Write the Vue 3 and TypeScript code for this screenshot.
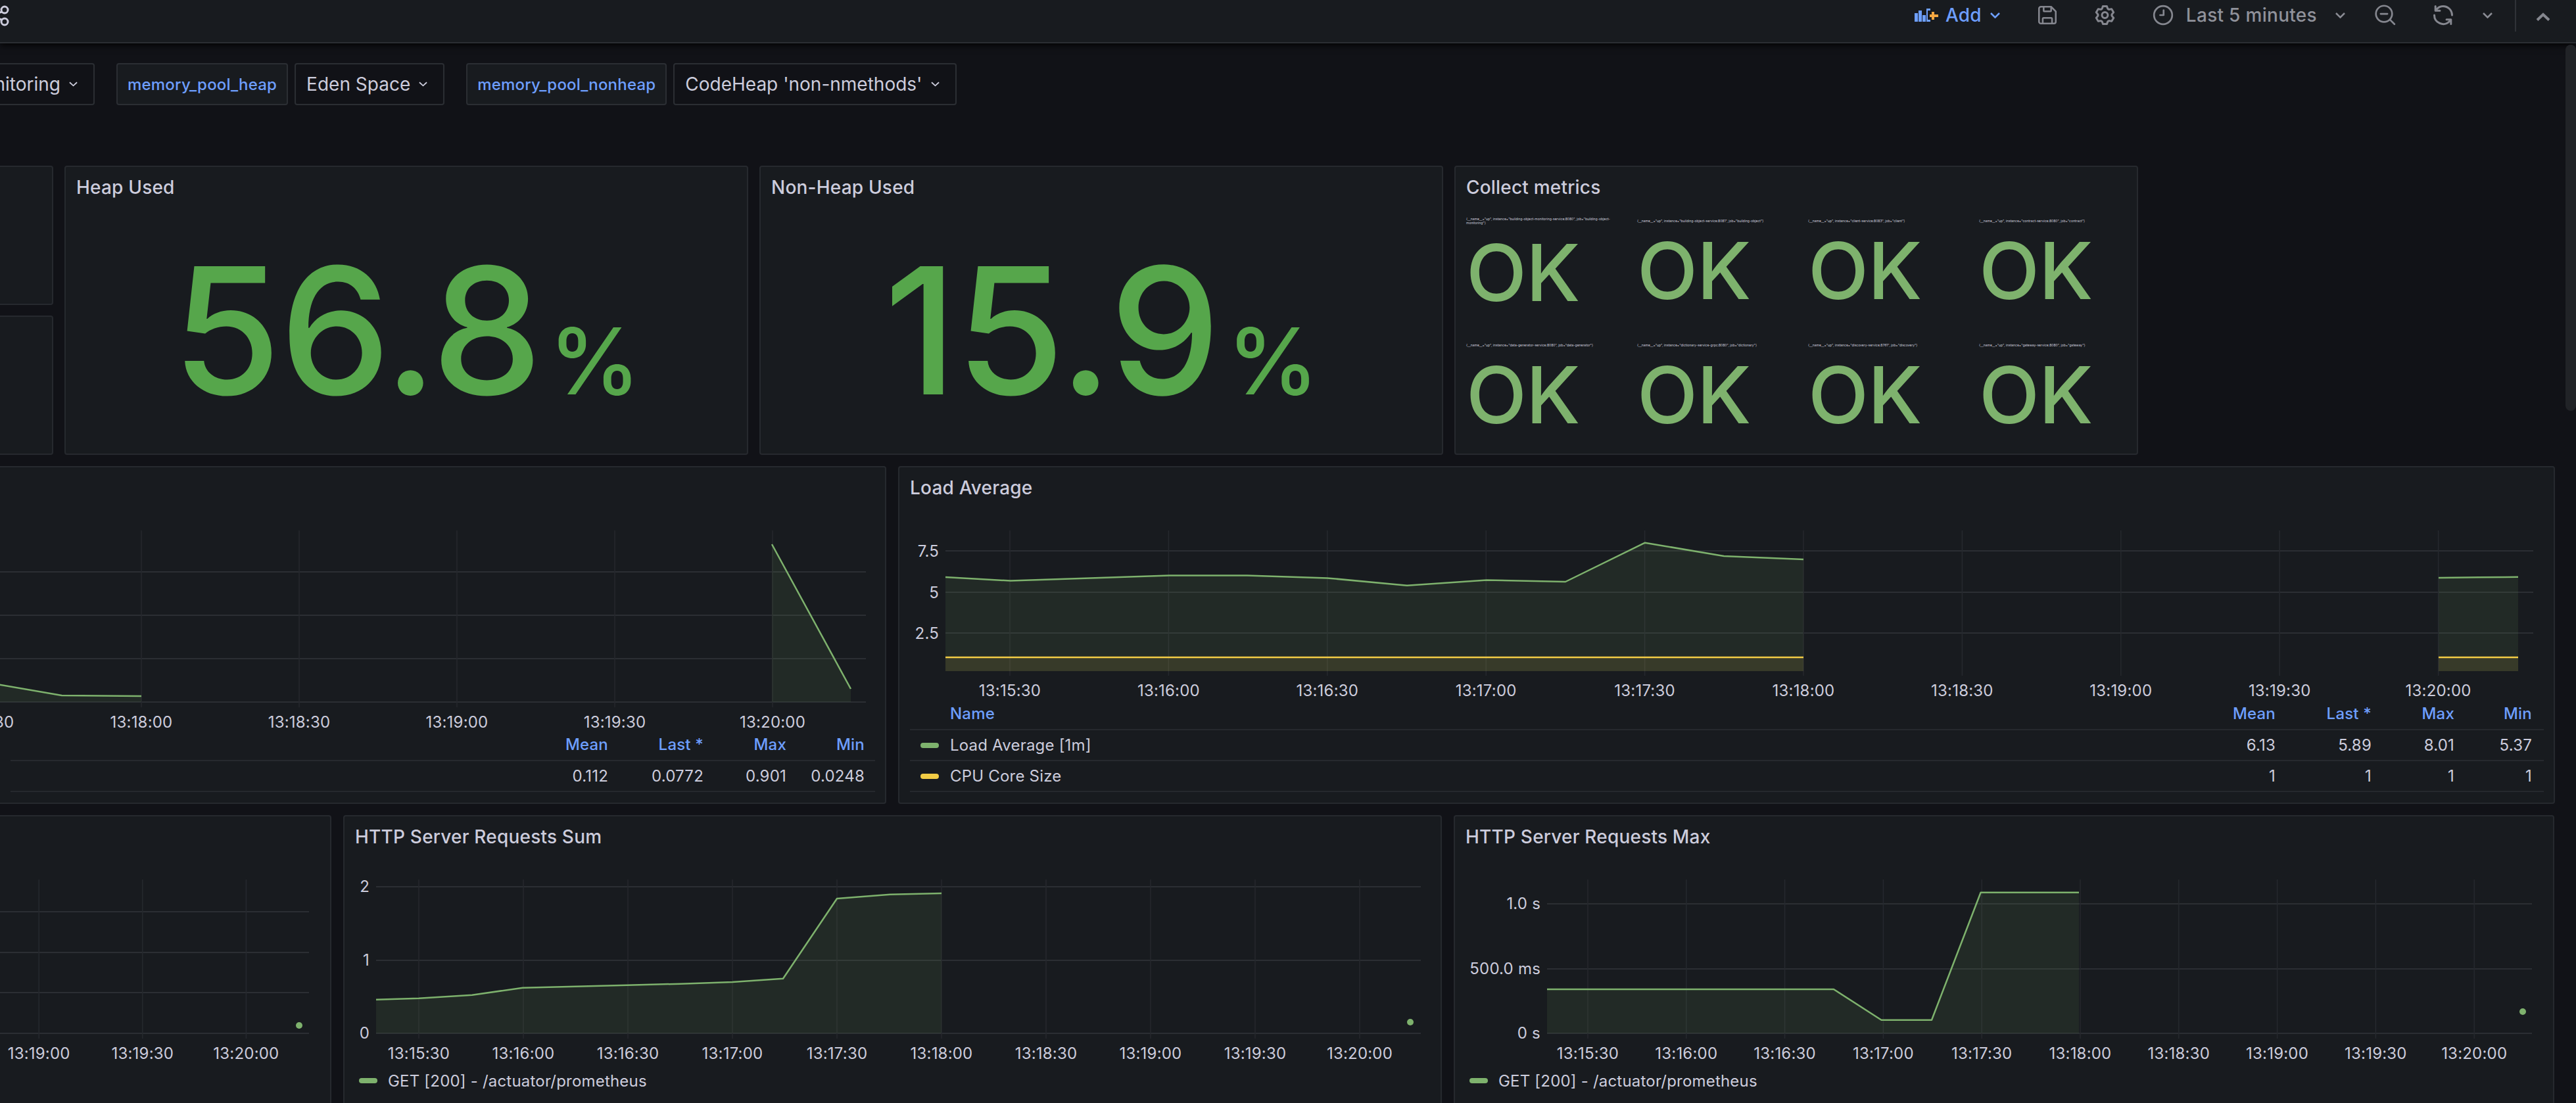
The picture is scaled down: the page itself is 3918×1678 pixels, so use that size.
<script setup lang="ts">
interface Series {
  color: string
  base: number
  segs: number[][][]
}
interface Chart {
  left: number
  top: number
  width: number
  height: number
  plotLeft: number
  plotRight: number
  gridTop: number
  gridBottom: number
  hlines: number[]
  ticks: { x: number; t: string }[]
  tickY: number
  yRight: number
  yLabels: { y: number; t: string }[]
  series: Series[]
  dots: number[][]
}

const GREEN = '#7eb26d'
const YELLOW = '#f2cc45'

// x axis helper: evenly spaced 30s ticks
const allTimes = ['13:15:30', '13:16:00', '13:16:30', '13:17:00', '13:17:30', '13:18:00', '13:18:30', '13:19:00', '13:19:30', '13:20:00']
const mkTicks = (first: number, step: number) => allTimes.map((t, i) => ({ x: first + step * i, t }))

const memChart: Chart = {
  left: 0, top: 773, width: 1346, height: 336,
  plotLeft: 0, plotRight: 1317, gridTop: 807, gridBottom: 1076,
  hlines: [870, 936, 1002, 1068],
  ticks: mkTicks(-985, 240), tickY: 1098,
  yRight: 0, yLabels: [],
  series: [{ color: GREEN, base: 1068, segs: [
    [[-10, 1040], [94, 1058], [215, 1059]],
    [[1174, 828], [1294, 1048]],
  ] }],
  dots: [],
}

const loadChart: Chart = {
  left: 1368, top: 773, width: 2516, height: 289,
  plotLeft: 1438, plotRight: 3853, gridTop: 807, gridBottom: 1028,
  hlines: [838, 901, 963],
  ticks: mkTicks(1536, 241.4), tickY: 1050,
  yRight: 1428,
  yLabels: [{ y: 838, t: '7.5' }, { y: 901, t: '5' }, { y: 963, t: '2.5' }],
  series: [
    { color: GREEN, base: 1021, segs: [
      [[1438, 878], [1537, 883.5], [1658, 879.5], [1778, 875.6], [1897, 875.6], [2019, 879.4], [2140, 890.8], [2261, 882.5], [2381, 885], [2502, 825.7], [2622, 846], [2743, 851]],
      [[3709, 879], [3770, 878.3], [3830, 877.7]],
    ] },
    { color: YELLOW, base: 1021, segs: [
      [[1438, 1000], [2743, 1000]],
      [[3709, 1000], [3830, 1000]],
    ] },
  ],
  dots: [],
}

const countChart: Chart = {
  left: 0, top: 1304, width: 502, height: 318,
  plotLeft: 0, plotRight: 470, gridTop: 1338, gridBottom: 1580,
  hlines: [1387, 1449, 1510, 1572],
  ticks: mkTicks(-1044, 157.6).slice(6), tickY: 1602,
  yRight: 0, yLabels: [],
  series: [],
  dots: [[455, 1560]],
}

const sumChart: Chart = {
  left: 524, top: 1304, width: 1667, height: 318,
  plotLeft: 572, plotRight: 2161, gridTop: 1338, gridBottom: 1580,
  hlines: [1349, 1461, 1572],
  ticks: mkTicks(637, 159), tickY: 1602,
  yRight: 562,
  yLabels: [{ y: 1348, t: '2' }, { y: 1460, t: '1' }, { y: 1571, t: '0' }],
  series: [{ color: GREEN, base: 1572, segs: [
    [[572, 1520.7], [637, 1518.7], [718, 1513.7], [795, 1502.7], [875, 1500.7], [954, 1498.7], [1035, 1496.7], [1114, 1494], [1191, 1488.7], [1273, 1367], [1354, 1360.7], [1432, 1359]],
  ] }],
  dots: [[2145, 1555]],
}

const maxChart: Chart = {
  left: 2214, top: 1304, width: 1670, height: 318,
  plotLeft: 2354, plotRight: 3852, gridTop: 1338, gridBottom: 1580,
  hlines: [1375, 1474, 1572],
  ticks: mkTicks(2416, 149.8), tickY: 1602,
  yRight: 2344,
  yLabels: [{ y: 1374, t: '1.0 s' }, { y: 1473, t: '500.0 ms' }, { y: 1571, t: '0 s' }],
  series: [{ color: GREEN, base: 1572, segs: [
    [[2354, 1505], [2790, 1505], [2862.5, 1551.7], [2939, 1551.7], [3013.6, 1357.7], [3163, 1357.7]],
  ] }],
  dots: [[3838, 1539]],
}

const rowTwo = [
  { title: '', chart: memChart, cls: 'p-mem', rows: [{ name: '', color: '', vals: ['0.112', '0.0772', '0.901', '0.0248'] }] },
  { title: 'Load Average', chart: loadChart, cls: 'p-load', rows: [
    { name: 'Load Average [1m]', color: GREEN, vals: ['6.13', '5.89', '8.01', '5.37'] },
    { name: 'CPU Core Size', color: YELLOW, vals: ['1', '1', '1', '1'] },
  ] },
]

const rowThree = [
  { title: '', chart: countChart, cls: 'p-count', legend: '' },
  { title: 'HTTP Server Requests Sum', chart: sumChart, cls: 'p-sum', legend: 'GET [200] - /actuator/prometheus' },
  { title: 'HTTP Server Requests Max', chart: maxChart, cls: 'p-max', legend: 'GET [200] - /actuator/prometheus' },
]

const targets = [
  '{__name__="up", instance="building-object-monitoring-service:8080", job="building-object-monitoring"}',
  '{__name__="up", instance="building-object-service:8081", job="building-object"}',
  '{__name__="up", instance="client-service:8083", job="client"}',
  '{__name__="up", instance="contract-service:8080", job="contract"}',
  '{__name__="up", instance="data-generator-service:8080", job="data-generator"}',
  '{__name__="up", instance="dictionary-service-grpc:8080", job="dictionary"}',
  '{__name__="up", instance="discovery-service:8761", job="discovery"}',
  '{__name__="up", instance="gateway-service:8080", job="gateway"}',
]

const linePts = (seg: number[][]) => seg.map(p => p.join(',')).join(' ')
const fillPts = (seg: number[][], base: number) =>
  `${seg[0][0]},${base} ${linePts(seg)} ${seg[seg.length - 1][0]},${base}`
</script>

<template>
  <div class="page">
    <!-- top bar -->
    <header class="topbar">
      <svg class="share" width="20" height="48" viewBox="0 0 20 48">
        <circle cx="7" cy="15" r="5" />
        <circle cx="7" cy="33" r="5" />
        <path d="M-4 20L3 18M-4 28L3 30" />
      </svg>
      <svg class="add-ico" width="36" height="20" viewBox="0 0 36 20">
        <rect x="0" y="7" width="5" height="13" fill="#6e9fff" />
        <rect x="6" y="3" width="5" height="17" fill="#6e9fff" />
        <rect x="12" y="10" width="5" height="10" fill="#6e9fff" />
        <rect x="18" y="0" width="6" height="20" fill="#6e9fff" />
        <rect x="20" y="3" width="16" height="14" fill="#181b1f" />
        <path d="M28 5v12M23 11h13" stroke="#f5a742" stroke-width="4" fill="none" />
      </svg>
      <span class="add-txt">Add</span>
      <svg class="chev ml13" width="15" height="9" viewBox="0 0 15 9"><path d="M1 1l6.5 6.5L14 1" stroke="#6e9fff" /></svg>
      <svg class="ico ml55" width="34" height="34" viewBox="0 0 24 24">
        <path d="M5 3h11l5 5v11a2 2 0 0 1-2 2H5a2 2 0 0 1-2-2V5a2 2 0 0 1 2-2z" />
        <path d="M8 3v4a1 1 0 0 0 1 1h6a1 1 0 0 0 1-1V4" />
        <path d="M7 21v-5a1 1 0 0 1 1-1h8a1 1 0 0 1 1 1v5" />
      </svg>
      <svg class="solid ml53" width="36" height="36" viewBox="0 0 24 24">
        <path d="M19.9,12.66a1,1,0,0,1,0-1.32L21.18,9.9a1,1,0,0,0,.12-1.17l-2-3.46a1,1,0,0,0-1.07-.48l-1.88.38a1,1,0,0,1-1.15-.66l-.61-1.83A1,1,0,0,0,13.64,2h-4a1,1,0,0,0-1,.68L8.08,4.51a1,1,0,0,1-1.15.66L5,4.79A1,1,0,0,0,4,5.27L2,8.73A1,1,0,0,0,2.1,9.9l1.27,1.44a1,1,0,0,1,0,1.32L2.1,14.1A1,1,0,0,0,2,15.27l2,3.46a1,1,0,0,0,1.07.48l1.88-.38a1,1,0,0,1,1.15.66l.61,1.83a1,1,0,0,0,1,.68h4a1,1,0,0,0,.95-.68l.61-1.83a1,1,0,0,1,1.15-.66l1.88.38a1,1,0,0,0,1.07-.48l2-3.46a1,1,0,0,0-.12-1.17ZM18.41,14l.8.9-1.28,2.22-1.18-.24a3,3,0,0,0-3.45,2L12.92,20H10.36L10,18.86a3,3,0,0,0-3.45-2l-1.18.24L4.07,14.89l.8-.9a3,3,0,0,0,0-4l-.8-.9L5.35,6.89l1.18.24a3,3,0,0,0,3.45-2L10.36,4h2.56l.38,1.14a3,3,0,0,0,3.45,2l1.18-.24,1.28,2.22-.8.9A3,3,0,0,0,18.41,14ZM11.64,8a4,4,0,1,0,4,4A4,4,0,0,0,11.64,8Zm0,6a2,2,0,1,1,2-2A2,2,0,0,1,11.64,14Z" />
      </svg>
      <svg class="ico ml52" width="36" height="36" viewBox="0 0 24 24">
        <circle cx="12" cy="12" r="9.2" />
        <path d="M12.5 7v5H9" />
      </svg>
      <span class="range">Last 5 minutes</span>
      <svg class="chev ml29" width="15" height="9" viewBox="0 0 15 9"><path d="M1 1l6.5 6.5L14 1" /></svg>
      <svg class="ico ml44" width="36" height="36" viewBox="0 0 24 24">
        <circle cx="10" cy="10.7" r="8.2" />
        <path d="M16 16.6l4.6 4.6M6.6 10.7h6.8" />
      </svg>
      <svg class="solid ml51" width="36" height="36" viewBox="0 0 24 24">
        <path d="M19.91,15.51H15.38a1,1,0,0,0,0,2h2.4A8,8,0,0,1,4,12a1,1,0,0,0-2,0,10,10,0,0,0,16.88,7.23V21a1,1,0,0,0,2,0V16.5A1,1,0,0,0,19.91,15.51ZM12,2A10,10,0,0,0,5.12,4.77V3a1,1,0,0,0-2,0V7.5a1,1,0,0,0,1,1h4.5a1,1,0,0,0,0-2H6.22A8,8,0,0,1,20,12a1,1,0,0,0,2,0A10,10,0,0,0,12,2Z" />
      </svg>
      <svg class="chev ml42" width="15" height="9" viewBox="0 0 15 9"><path d="M1 1l6.5 6.5L14 1" /></svg>
      <div class="divider"></div>
      <svg class="up" width="22" height="13" viewBox="0 0 22 13"><path d="M2 11.5L11 3l9 8.5" /></svg>
    </header>

    <!-- template variables -->
    <div class="vars">
      <div class="dd dd-cut">
        <span>building-object-monitoring</span>
        <svg width="13" height="8" viewBox="0 0 14 8"><path d="M1 1l6 5.5L13 1" /></svg>
      </div>
      <div class="lbl ml33">memory_pool_heap</div>
      <div class="dd ml10">
        <span>Eden Space</span>
        <svg width="13" height="8" viewBox="0 0 14 8"><path d="M1 1l6 5.5L13 1" /></svg>
      </div>
      <div class="lbl ml33">memory_pool_nonheap</div>
      <div class="dd ml10">
        <span>CodeHeap 'non-nmethods'</span>
        <svg width="13" height="8" viewBox="0 0 14 8"><path d="M1 1l6 5.5L13 1" /></svg>
      </div>
    </div>

    <!-- stat row -->
    <section class="row row-one">
      <div class="stack">
        <div class="panel cut"></div>
        <div class="panel cut"></div>
      </div>
      <div class="panel stat-panel">
        <div class="title">Heap Used</div>
        <div class="stat"><div class="stat-in"><span class="num">56.8</span><span class="unit">%</span></div></div>
      </div>
      <div class="panel stat-panel">
        <div class="title">Non-Heap Used</div>
        <div class="stat"><div class="stat-in"><span class="num">15.9</span><span class="unit">%</span></div></div>
      </div>
      <div class="panel stat-panel">
        <div class="title">Collect metrics</div>
        <div class="oks">
          <div v-for="t in targets" :key="t" class="ok-cell">
            <div class="ok-lbl">{{ t }}</div>
            <div class="ok-val">OK</div>
          </div>
        </div>
      </div>
    </section>

    <!-- charts with table legend -->
    <section class="row row-two">
      <div v-for="p in rowTwo" :key="p.cls" class="panel" :class="p.cls">
        <div class="title">{{ p.title }}</div>
        <svg class="chart" :width="p.chart.width" :height="p.chart.height" :viewBox="`${p.chart.left} ${p.chart.top} ${p.chart.width} ${p.chart.height}`">
          <line v-for="y in p.chart.hlines" :key="y" class="gh" :x1="p.chart.plotLeft" :x2="p.chart.plotRight" :y1="y" :y2="y" />
          <line v-for="k in p.chart.ticks" :key="k.t" class="gv" :x1="k.x" :x2="k.x" :y1="p.chart.gridTop" :y2="p.chart.gridBottom" />
          <template v-for="s in p.chart.series" :key="s.color">
            <polygon v-for="(seg, i) in s.segs" :key="i" :points="fillPts(seg, s.base)" :fill="s.color" fill-opacity="0.1" />
            <polyline v-for="(seg, i) in s.segs" :key="'l' + i" class="ln" :points="linePts(seg)" :stroke="s.color" />
          </template>
          <text v-for="k in p.chart.ticks" :key="'t' + k.t" class="tx" text-anchor="middle" :x="k.x" :y="p.chart.tickY">{{ k.t }}</text>
          <text v-for="l in p.chart.yLabels" :key="l.t" class="tx" text-anchor="end" :x="p.chart.yRight" :y="l.y">{{ l.t }}</text>
        </svg>
        <div class="tbl">
          <div class="tr th">
            <div class="nm"><span v-if="p.title" class="nm-h">Name</span></div>
            <div>Mean</div><div>Last *</div><div>Max</div><div>Min</div>
          </div>
          <div v-for="r in p.rows" :key="r.name" class="tr">
            <div class="nm">
              <i v-if="r.color" class="swatch" :style="{ background: r.color }"></i>{{ r.name }}
            </div>
            <div v-for="(v, i) in r.vals" :key="i">{{ v }}</div>
          </div>
        </div>
      </div>
    </section>

    <!-- charts with list legend -->
    <section class="row row-three">
      <div v-for="p in rowThree" :key="p.cls" class="panel" :class="p.cls">
        <div class="title">{{ p.title }}</div>
        <svg class="chart" :width="p.chart.width" :height="p.chart.height" :viewBox="`${p.chart.left} ${p.chart.top} ${p.chart.width} ${p.chart.height}`">
          <line v-for="y in p.chart.hlines" :key="y" class="gh" :x1="p.chart.plotLeft" :x2="p.chart.plotRight" :y1="y" :y2="y" />
          <line v-for="k in p.chart.ticks" :key="k.t" class="gv" :x1="k.x" :x2="k.x" :y1="p.chart.gridTop" :y2="p.chart.gridBottom" />
          <template v-for="s in p.chart.series" :key="s.color">
            <polygon v-for="(seg, i) in s.segs" :key="i" :points="fillPts(seg, s.base)" :fill="s.color" fill-opacity="0.1" />
            <polyline v-for="(seg, i) in s.segs" :key="'l' + i" class="ln" :points="linePts(seg)" :stroke="s.color" />
          </template>
          <circle v-for="d in p.chart.dots" :key="d[0]" :cx="d[0]" :cy="d[1]" r="5" :fill="GREEN" />
          <text v-for="k in p.chart.ticks" :key="'t' + k.t" class="tx" text-anchor="middle" :x="k.x" :y="p.chart.tickY">{{ k.t }}</text>
          <text v-for="l in p.chart.yLabels" :key="l.t" class="tx" text-anchor="end" :x="p.chart.yRight" :y="l.y">{{ l.t }}</text>
        </svg>
        <div v-if="p.legend" class="legend">
          <i class="swatch" :style="{ background: GREEN }"></i>{{ p.legend }}
        </div>
      </div>
    </section>

    <div class="scroll-thumb"></div>
  </div>
</template>

<style scoped>
.page {
  position: relative;
  width: 3918px;
  height: 1678px;
  overflow: hidden;
  background: #111217;
  color: #ccccdc;
  font-family: Inter, "Liberation Sans", sans-serif;
  font-size: 24px;
  letter-spacing: 0.2px;
}

.topbar {
  position: relative;
  display: flex;
  align-items: center;
  justify-content: flex-end;
  box-sizing: border-box;
  height: 66px;
  padding: 0 39px 18px 0;
  background: #181b1f;
  border-bottom: 2px solid #2b2e33;
  box-shadow: 0 2px 10px #000;
}
.share {
  position: absolute;
  left: 0;
  top: 0;
  fill: none;
  stroke: #ccccdc;
  stroke-width: 3;
  overflow: visible;
}
.add-txt {
  margin-left: 11px;
  font-size: 28px;
  font-weight: 500;
  color: #6e9fff;
}
.range {
  margin-left: 17px;
  font-size: 28px;
  font-weight: 500;
  letter-spacing: 0.3px;
  color: #8f919a;
}
.topbar svg { flex: none; }
.chev path { fill: none; stroke: #8a8c94; stroke-width: 2.5; }
.chev path[stroke] { stroke: #6e9fff; }
.ico { fill: none; stroke: #85878f; stroke-width: 1.8; stroke-linecap: round; stroke-linejoin: round; }
.solid { fill: #85878f; }
.divider { align-self: flex-start; width: 2px; height: 48px; margin-left: 34px; background: #2f3237; }
.up { margin-left: 30px; margin-top: 4px; fill: none; stroke: #85878f; stroke-width: 4; }
.ml13 { margin-left: 13px; }
.ml55 { margin-left: 55px; }
.ml53 { margin-left: 53px; }
.ml52 { margin-left: 52px; }
.ml29 { margin-left: 28px; }
.ml44 { margin-left: 44px; }
.ml51 { margin-left: 51px; }
.ml42 { margin-left: 42px; }

.vars {
  display: flex;
  height: 64px;
  margin-top: 30px;
}
.lbl, .dd {
  display: flex;
  align-items: center;
  box-sizing: border-box;
  height: 64px;
  border: 2px solid #2b2e33;
  border-radius: 4px;
  white-space: nowrap;
}
.lbl {
  padding: 0 15px;
  background: #181b1f;
  color: #6e9fff;
  font-size: 24px;
  font-weight: 500;
  letter-spacing: 0.2px;
}
.dd {
  gap: 13px;
  padding: 0 24px 0 16px;
  background: #111217;
  font-size: 28px;
  letter-spacing: 0;
}
.dd svg { flex: none; fill: none; stroke: #ccccdc; stroke-width: 2; }
.dd-cut {
  justify-content: flex-end;
  width: 144px;
  border-left: none;
  border-radius: 0 4px 4px 0;
}
.dd-cut span { flex: none; }
.ml10 { margin-left: 10px; }
.ml33 { margin-left: 33px; }

.row { display: flex; }
.row-one { gap: 17px; height: 440px; margin-top: 92px; }
.row-two { gap: 18px; height: 514px; margin-top: 17px; }
.row-three { gap: 18px; height: 480px; margin-top: 17px; }

.panel {
  display: flex;
  flex-direction: column;
  flex: none;
  box-sizing: border-box;
  background: #181b1f;
  border: 2px solid #26292e;
  border-radius: 4px;
}
.title {
  flex: none;
  height: 62px;
  padding: 0 16px;
  font-size: 28px;
  font-weight: 500;
  line-height: 63px;
}

.stack { display: flex; flex-direction: column; gap: 16px; width: 81px; }
.cut { flex: 1; border-left: none; border-radius: 0 4px 4px 0; }
.stat-panel { width: 1040px; }
.stat {
  display: flex;
  flex: 1;
  align-items: center;
  justify-content: center;
  color: #56a64b;
  font-weight: 500;
  letter-spacing: 0;
  line-height: 1;
}
.stat-in { display: flex; align-items: baseline; }
.num { font-size: 268px; letter-spacing: -2px; }
.unit { margin-left: 12px; font-size: 140px; }

.oks {
  display: grid;
  grid-template-columns: repeat(4, 260px);
  grid-auto-rows: 189px;
  margin-top: -8px;
  padding: 0 16px;
}
.ok-cell {
  display: flex;
  flex-direction: column;
  justify-content: center;
  gap: 13px;
}
.ok-lbl {
  width: 236px;
  font-size: 5px;
  letter-spacing: 0;
  line-height: 6px;
}
.ok-val {
  color: #7eb26d;
  font-size: 120px;
  font-weight: 550;
  letter-spacing: -1px;
  line-height: 120px;
}

.chart { display: block; flex: none; }
.gh { stroke: #2b2e33; stroke-width: 2; }
.gv { stroke: #26292e; stroke-width: 1.5; }
.ln { fill: none; stroke-width: 2.5; stroke-linejoin: round; }
.tx { fill: #ccccdc; font-size: 24px; dominant-baseline: central; }

.p-mem { width: 1348px; border-left: none; border-radius: 0 4px 4px 0; }
.p-load { width: 2520px; }
.p-count { width: 504px; border-left: none; border-radius: 0 4px 4px 0; }
.p-sum { width: 1671px; }
.p-max { width: 1674px; }

.tbl { margin: 0 15px 0 16px; }
.tr {
  display: grid;
  grid-template-columns: 1fr 120px 146px 126px 136px;
  box-sizing: border-box;
  height: 47px;
  border-bottom: 2px solid #26292e;
  line-height: 46px;
  text-align: right;
}
.p-mem .tr { grid-template-columns: 1fr 120px 145px 126px 135px; }
.tr > div:last-child { padding-right: 18px; }
.p-mem .tr > div:last-child { padding-right: 16px; }
.th { height: 49px; color: #6e9fff; font-weight: 500; line-height: 48px; }
.nm { display: flex; align-items: center; padding-left: 16px; text-align: left; color: #ccccdc; }
.nm-h { margin-left: 45px; color: #6e9fff; }
.swatch {
  display: inline-block;
  flex: none;
  width: 28px;
  height: 8px;
  margin-right: 17px;
  border-radius: 4px;
}
.legend {
  display: flex;
  align-items: center;
  height: 44px;
  padding-left: 22px;
}
.legend .swatch { margin-right: 16px; }

.scroll-thumb {
  position: absolute;
  top: 68px;
  right: 0;
  width: 16px;
  height: 557px;
  border-radius: 8px;
  background: #212327;
}
</style>

<style>
html, body { margin: 0; background: #111217; overflow: hidden; }
</style>
